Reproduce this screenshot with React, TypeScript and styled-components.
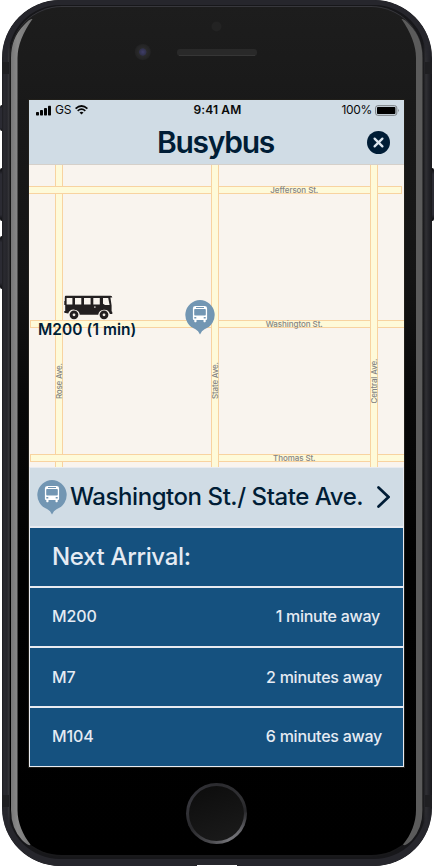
import React from "react";
import styled, { createGlobalStyle } from "styled-components";

const navy = "#001d36";

const GlobalStyle = createGlobalStyle`
  * { box-sizing: border-box; }
  body { margin: 0; background: #fff; font-family: Inter, "Liberation Sans", sans-serif; }
`;

const Stage = styled.main`
  position: relative;
  width: 434px;
  height: 866px;
  overflow: hidden;
  padding: 0 2px;
`;

const SideButton = styled.i<{ $top: number; $height: number; $right?: boolean }>`
  position: absolute;
  top: ${(p) => p.$top}px;
  ${(p) => (p.$right ? "right: 0;" : "left: 0;")}
  width: 3px;
  height: ${(p) => p.$height}px;
  border-radius: ${(p) => (p.$right ? "0 2px 2px 0" : "2px 0 0 2px")};
  background: linear-gradient(#0a0a0c, #2b2b33 12%, #2b2b33 88%, #0a0a0c);
`;

const Shell = styled.div`
  position: relative;
  height: 866px;
  border-radius: 58px;
  padding: 6px 9px 9px 8px;
  background: linear-gradient(90deg, #1d1d21, #2a2a30 2px, #26262b 5px, #38383c 7px, #17171a 8px, #17171a 421px, #303034 424px, #232328 427px, #19191c 430px);
  &::before {
    content: "";
    position: absolute;
    inset: 0;
    border-radius: 58px;
    border: 6px solid #26262c;
    border-width: 5px 6px 7px;
    mask: linear-gradient(#000 40px, transparent 70px, transparent 800px, #000 830px);
  }
`;

const Antenna = styled.i<{ $top: number; $right?: boolean }>`
  position: absolute;
  top: ${(p) => p.$top}px;
  ${(p) => (p.$right ? "right: 0;" : "left: 0;")}
  width: 7px;
  height: 12px;
  background: #1f1f22;
`;

const Face = styled.div`
  position: relative;
  height: 851px;
  border-radius: 52px;
  padding: 94px 18px 0 19px;
  border-top: 1px solid #37373c;
  border-bottom: 2px solid #19191b;
  background: linear-gradient(#1d1d1d, #191919 100px, #141414 270px, #080808 400px, #010101 560px, #000);
`;

const Drawing = styled.svg`
  display: block;
`;

const Overlay = styled.svg`
  position: absolute;
  inset: 0;
  pointer-events: none;
`;

const Screen = styled.section`
  position: relative;
  width: 375px;
  height: 667px;
  margin-top: -1px;
  display: flex;
  flex-direction: column;
  background: #e8ebf1;
  box-shadow: 0 0 0 1px #211f1a;
`;

const Header = styled.header`
  height: 65px;
  background: #d0dce5;
  border-bottom: 1px solid #d5d0ca;
`;

const StatusBar = styled.div`
  height: 20px;
  display: grid;
  grid-template-columns: 173px auto 1fr;
  align-items: center;
  padding: 0 4px 0 7px;
  margin-right: 0;
  font-size: 12px;
  line-height: 20px;
  color: #0a0a0a;
`;

const StatusGroup = styled.div<{ $end?: boolean }>`
  display: flex;
  align-items: center;
  justify-content: ${(p) => (p.$end ? "flex-end" : "flex-start")};
  gap: ${(p) => (p.$end ? 3 : 4)}px;
`;

const Clock = styled.span`
  margin-left: -16px;
  padding-left: 0.5px;
  font-weight: 600;
  letter-spacing: 0.12px;
`;

const Carrier = styled.span`
  letter-spacing: -0.3px;
`;

const TitleBar = styled.div`
  height: 44px;
  display: grid;
  grid-template-columns: 58px 1fr 60px;
  align-items: center;
  text-align: center;
`;

const Title = styled.h1`
  grid-column: 2;
  margin: 0;
  font-size: 30px;
  font-weight: 600;
  line-height: 44px;
  letter-spacing: -1.25px;
  color: ${navy};
`;

const PlainButton = styled.button`
  border: 0;
  padding: 0;
  background: none;
  cursor: pointer;
`;

const CloseButton = styled(PlainButton)`
  justify-self: center;
  width: 23px;
  height: 23px;
  margin-left: 9px;
`;

const MapArea = styled.div`
  position: relative;
  height: 302px;
  background: #f9f4ee;
`;

const MapPin = styled.div`
  position: absolute;
  left: 156px;
  top: 135px;
`;

const BusMarker = styled.div`
  position: absolute;
  left: 9px;
  top: 129px;
`;

const BusLabel = styled.div`
  margin-top: 1px;
  font-size: 15.5px;
  font-weight: 600;
  line-height: 18px;
  letter-spacing: 0.05px;
  white-space: nowrap;
  color: ${navy};
`;

const BusDrawing = styled(Drawing)`
  margin-left: 25px;
`;

const Board = styled.div`
  display: grid;
  grid-template-rows: repeat(5, 58px);
  gap: 2px;
  padding: 1px;
  background: #e8ebf1;
`;

const StationBar = styled.div`
  display: flex;
  align-items: center;
  padding: 0 13px 0 7px;
  background: #d0dce5;
  color: ${navy};
`;

const StationName = styled.h2`
  flex: 1;
  margin: 0 0 0 3px;
  padding-bottom: 2px;
  font-size: 24px;
  font-weight: 500;
  letter-spacing: -0.44px;
  white-space: nowrap;
`;

const ArrivalHeading = styled.h3`
  margin: 0;
  padding-left: 22px;
  background: #15517f;
  color: #e5ebf3;
  font-size: 24px;
  font-weight: 500;
  line-height: 58px;
  letter-spacing: -0.33px;
`;

const ArrivalRow = styled.div<{ $inset: number; $line: number }>`
  display: flex;
  justify-content: space-between;
  padding: 0 ${(p) => p.$inset}px 0 22px;
  background: #15517f;
  color: #e5ebf3;
  font-size: 16px;
  font-weight: 500;
  line-height: ${(p) => p.$line}px;
`;

const RouteName = styled.span`
  letter-spacing: -0.1px;
`;

const Wait = styled.span`
  letter-spacing: -0.26px;
`;

const HomeButton = styled.div`
  position: absolute;
  left: 184px;
  top: 783px;
  width: 61px;
  height: 61px;
  border-radius: 50%;
  padding: 3px;
  background: conic-gradient(#2b2b2f, #303033 60deg, #27272a 85deg, #6b6b70 130deg, #737378 155deg, #4c4c50 190deg, #29292c 240deg, #36363c 290deg, #2b2b2f);
  &::before {
    content: "";
    display: block;
    height: 55px;
    border-radius: 50%;
    background: linear-gradient(160deg, #0c0c0c, #1b1b1b);
  }
`;

const DockMark = styled.i`
  position: absolute;
  left: 197px;
  top: 865px;
  width: 40px;
  height: 1px;
  background: #fff;
`;

const StopPin = () => (
  <Drawing width="30" height="35" viewBox="0 0 30 35">
    <path d="M15 0a15 15 0 0 1 4.5 29.2Q16.7 30.5 15 34.5Q13.3 30.5 10.5 29.2A15 15 0 0 1 15 0Z" fill="#7296b3" />
    <path
      fillRule="evenodd"
      fill="#fff"
      d="M10.5 6h9Q22 6 22.1 8.2V18.9Q22.1 20 21 20H20.7V21.6Q20.7 22.2 20 22.2H19.1Q18.5 22.2 18.5 21.5V20H11.5V21.5Q11.5 22.2 10.9 22.2H10Q9.3 22.2 9.3 21.6V20H9Q7.9 20 7.9 18.9V8.2Q8 6 10.5 6ZM11 7.1V7.9H19V7.1ZM10 9Q9.2 9 9.2 9.8V14.4Q9.2 15.4 10 15.4H20Q20.8 15.4 20.8 14.4V9.8Q20.8 9 20 9ZM9.3 16.9V18.4H11.3V16.9ZM18.7 16.9V18.4H20.7V16.9Z"
    />
  </Drawing>
);

const Bus = () => (
  <BusDrawing width="50" height="26" viewBox="0 0 50 26">
    <path
      fillRule="evenodd"
      fill="#231f20"
      d="M2.5 1.8H47.5Q49.4 2 49.3 3.6H47.4L48.6 11.5V17.3L49.3 18V20H46.9A6 6 0 0 0 35.2 20.8H16.8A6 6 0 0 0 5.2 19.6L1.3 18.7V17H2.2V11H1.3V7H1.8V3.5Q1.8 1.8 2.5 1.8ZM3.6 4V10.4H9.4V4ZM12 4V10.4H18.3V4ZM21 4V10.4H27.6V4ZM30.3 4V10.4H36.8V4ZM40 4V9.8L42 11H46.6L45.2 4ZM31.4 12.2V13.9H32.4V12.2Z"
    />
    <g fill="#f4efe9" stroke="#231f20" strokeWidth="3">
      <circle cx="11" cy="20.8" r="2.9" />
      <circle cx="41" cy="20.8" r="2.9" />
    </g>
  </BusDrawing>
);

const CityMap = () => (
  <Drawing width="375" height="302" viewBox="0 165 375 302">
    <g fill="#fefad9" stroke="#f8d3a0">
      <rect x="26.5" y="160.5" width="7" height="320" />
      <rect x="-5" y="186.5" width="377.5" height="7" />
      <rect x="1.5" y="320.5" width="385" height="7" />
      <rect x="1.5" y="454.5" width="385" height="7" />
      <rect x="182.5" y="160.5" width="7" height="320" />
      <rect x="341.5" y="160.5" width="7" height="320" />
    </g>
    <g fill="#858585" fontSize="8" fontWeight="500" textAnchor="middle">
      <text x="265.3" y="193" textLength="48">Jefferson St.</text>
      <text x="265.3" y="327" textLength="57">Washington St.</text>
      <text x="265.3" y="461" textLength="42.5">Thomas St.</text>
      <text transform="translate(33.3 381) rotate(-90)" textLength="36">Rose Ave.</text>
      <text transform="translate(189.3 380.5) rotate(-90)" textLength="37">State Ave.</text>
      <text transform="translate(347.8 381) rotate(-90)" textLength="45">Central Ave.</text>
    </g>
  </Drawing>
);

const Signal = () => (
  <Drawing width="15" height="11" viewBox="0 0 15 11" fill="#050505">
    <rect x="0" y="7" width="3" height="3.5" rx=".7" />
    <rect x="4" y="5" width="3" height="5.5" rx=".7" />
    <rect x="8" y="3" width="3" height="7.5" rx=".7" />
    <rect x="12" y="0.7" width="3" height="9.8" rx=".7" />
  </Drawing>
);

const Wifi = () => (
  <Drawing width="13" height="10" viewBox="0 0 13 10" fill="none" stroke="#050505" strokeWidth="1.7">
    <path d="M.6 3.6Q6.5-1.6 12.4 3.6M2.7 5.8Q6.5 2.4 10.3 5.8" />
    <path d="M6.5 9.5L4.5 7.5Q6.5 6 8.5 7.5Z" fill="#050505" stroke="none" />
  </Drawing>
);

const Battery = () => (
  <Drawing width="25" height="11" viewBox="0 0 25 11">
    <rect x=".6" y=".7" width="21.2" height="9.6" rx="2.2" fill="none" stroke="#777c80" />
    <rect x="2" y="2" width="18.4" height="7" rx=".8" />
    <path d="M23.2 3.8Q24.8 5.4 23.2 7.2Z" fill="#777c80" />
  </Drawing>
);

const PhoneDetails = () => (
  <Overlay width="434" height="866" viewBox="0 0 434 866">
    <defs>
      <linearGradient id="gloss" x1="0" x2="1" y1="0" y2="0">
        <stop offset="0" stopColor="#777" />
        <stop offset=".3" stopColor="#898989" />
        <stop offset="1" stopColor="#717171" />
      </linearGradient>
      <radialGradient id="lens">
        <stop offset="0" stopColor="#3f3e68" />
        <stop offset=".42" stopColor="#30304b" />
        <stop offset=".5" stopColor="#2a2a2b" />
        <stop offset="1" stopColor="#222223" />
      </radialGradient>
    </defs>
    <path d="M32.5 19Q30 18 24 25Q11 38 11 58V810Q11 828 22 840Q29 847 30.5 844.5C23 835 17.5 823 17.5 810V58Q17.5 40 32.5 19Z" fill="url(#gloss)" />
    <path d="M401.5 19Q404 18 410 25Q422.5 38 422.5 58V810Q422.5 828 412 840Q405 847 403 844.5C411 835 416 823 416 810V58Q416 40 401.5 19Z" fill="#5b5b5b" />
    <circle cx="142.8" cy="52" r="8" fill="url(#lens)" />
    <circle cx="216.5" cy="26.5" r="5" fill="#232323" />
    <rect x="177" y="49" width="80" height="7" rx="3" fill="#292929" />
    <path d="M179 55.5H255" stroke="#363636" />
  </Overlay>
);

const arrivals = [
  { line: "M200", wait: "1 minute away", inset: 23, leading: 57 },
  { line: "M7", wait: "2 minutes away", inset: 21, leading: 58 },
  { line: "M104", wait: "6 minutes away", inset: 21, leading: 56 },
];

export default function App() {
  return (
    <>
      <GlobalStyle />
      <Stage>
        <SideButton $top={105} $height={26} />
        <SideButton $top={168} $height={53} />
        <SideButton $top={236} $height={53} />
        <SideButton $top={168} $height={53} $right />
        <Shell>
          <Antenna $top={62} />
          <Antenna $top={62} $right />
          <Antenna $top={795} />
          <Antenna $top={795} $right />
          <Face>
            <Screen>
              <Header>
                <StatusBar>
                  <StatusGroup>
                    <Signal />
                    <Carrier>GS</Carrier>
                    <Wifi />
                  </StatusGroup>
                  <Clock>9:41 AM</Clock>
                  <StatusGroup $end>
                    <Carrier>100%</Carrier>
                    <Battery />
                  </StatusGroup>
                </StatusBar>
                <TitleBar>
                  <Title>Busybus</Title>
                  <CloseButton aria-label="Close">
                    <Drawing width="23" height="23" viewBox="0 0 23 23">
                      <circle cx="11.5" cy="11.5" r="11.5" fill={navy} />
                      <path d="M7.6 7.6L15.4 15.4M15.4 7.6L7.6 15.4" stroke="#dce7f0" strokeWidth="2.3" strokeLinecap="round" />
                    </Drawing>
                  </CloseButton>
                </TitleBar>
              </Header>
              <MapArea>
                <CityMap />
                <BusMarker>
                  <Bus />
                  <BusLabel>M200 (1 min)</BusLabel>
                </BusMarker>
                <MapPin>
                  <StopPin />
                </MapPin>
              </MapArea>
              <Board>
                <StationBar>
                  <StopPin />
                  <StationName>Washington St./ State Ave.</StationName>
                  <PlainButton aria-label="Open station">
                    <Drawing width="13" height="23" viewBox="0 0 13 23" fill="none" stroke={navy} strokeWidth="2.7" strokeLinecap="round">
                      <path d="M1.5 1.5L11.5 11L1.5 20.5" />
                    </Drawing>
                  </PlainButton>
                </StationBar>
                <ArrivalHeading>Next Arrival:</ArrivalHeading>
                {arrivals.map((a) => (
                  <ArrivalRow key={a.line} $inset={a.inset} $line={a.leading}>
                    <RouteName>{a.line}</RouteName>
                    <Wait>{a.wait}</Wait>
                  </ArrivalRow>
                ))}
              </Board>
            </Screen>
          </Face>
          <HomeButton />
        </Shell>
        <PhoneDetails />
        <DockMark />
      </Stage>
    </>
  );
}
